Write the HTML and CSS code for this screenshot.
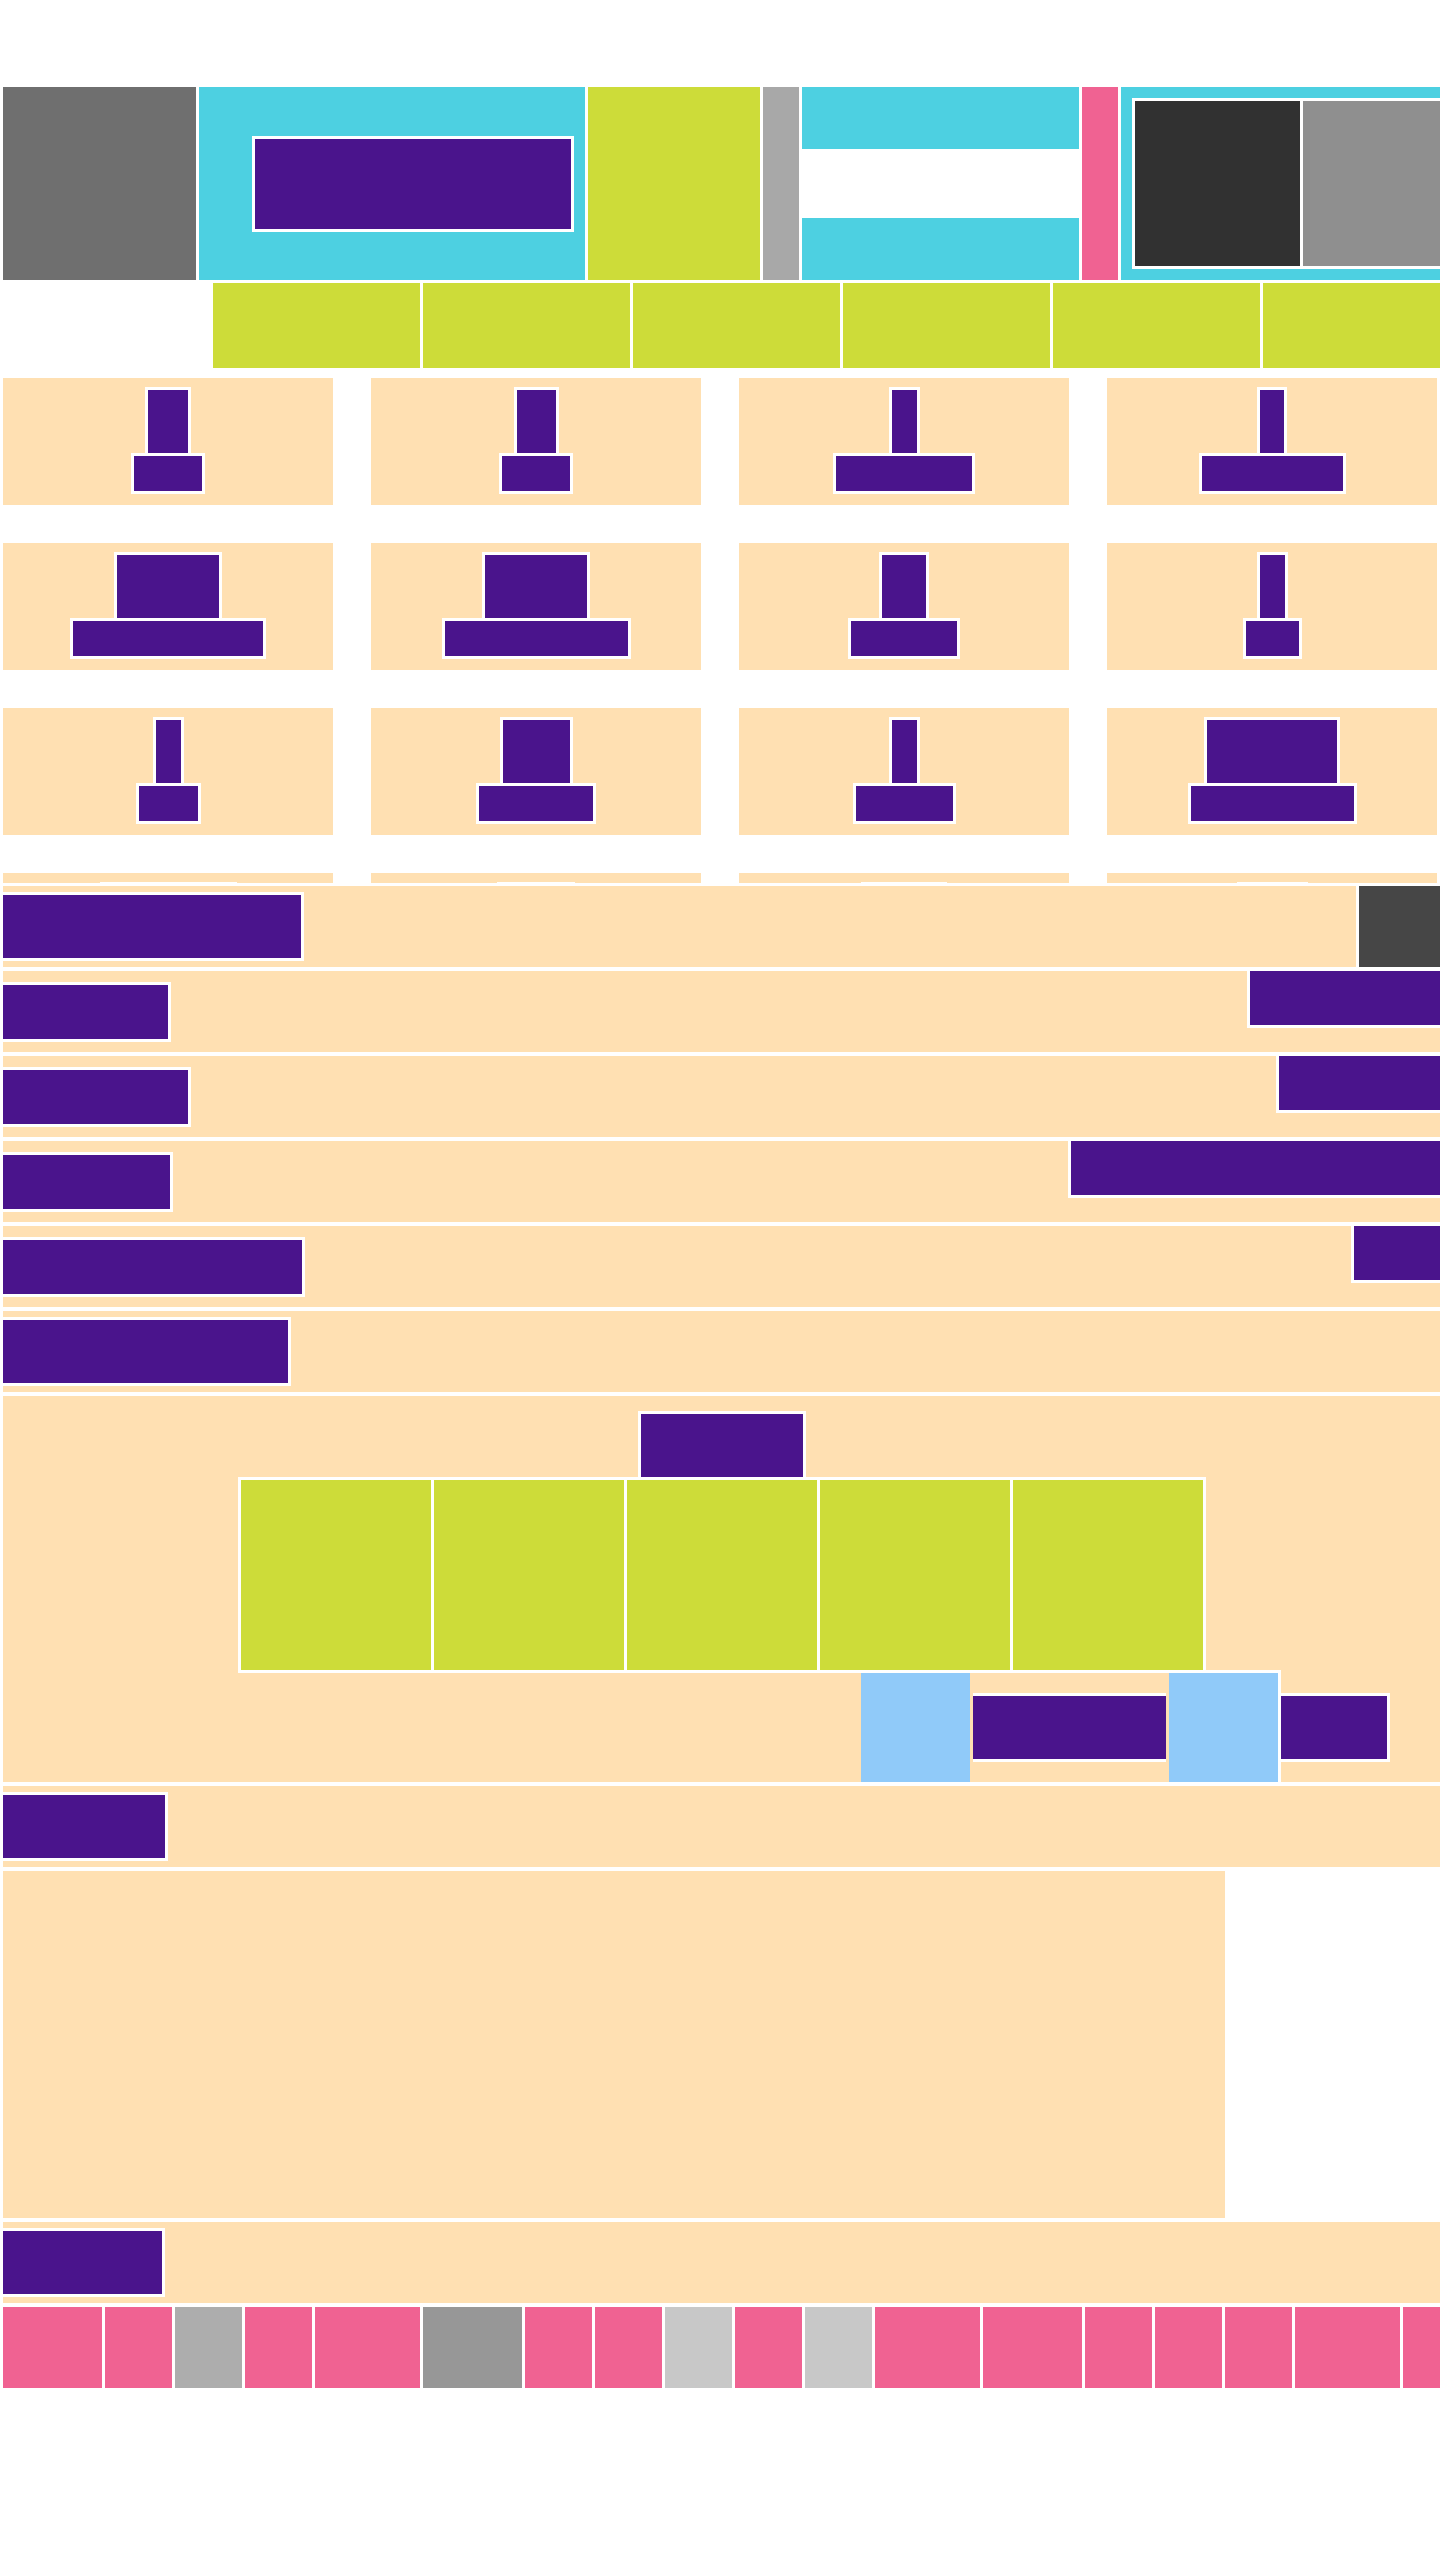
FILE: index.html
```html
<!DOCTYPE html>
<html lang="en">
<head>
    <meta charset="UTF-8">
    <meta name="viewport" content="width=device-width, initial-scale=1.0">
    <title>Wireframe</title>
    <link rel="stylesheet" href="styles.css">
</head>
<body>

    <div class="page">
        <div class="header">
            <div class="hd-gray"></div>
            <div class="hd-cyan"><div class="hd-title"></div></div>
            <div class="hd-lime"></div>
            <div class="hd-bar gray"></div>
            <div class="hd-stack">
                <div class="stack-cyan"></div>
                <div class="stack-gap"></div>
                <div class="stack-cyan"></div>
            </div>
            <div class="hd-bar pink"></div>
            <div class="hd-media">
                <div class="media-frame">
                    <div class="media-dark"></div>
                    <div class="media-light"></div>
                </div>
            </div>
        </div>

        <div class="tabs">
            <div class="tab"></div>
            <div class="tab"></div>
            <div class="tab"></div>
            <div class="tab"></div>
            <div class="tab"></div>
            <div class="tab"></div>
        </div>

        <div class="grid">
            <div class="card"><div class="peg" style="width:40px"></div><div class="base" style="width:68px"></div></div>
            <div class="card"><div class="peg" style="width:39px"></div><div class="base" style="width:68px"></div></div>
            <div class="card"><div class="peg" style="width:25px"></div><div class="base" style="width:136px"></div></div>
            <div class="card"><div class="peg" style="width:24px"></div><div class="base" style="width:141px"></div></div>

            <div class="card"><div class="peg" style="width:102px"></div><div class="base" style="width:190px"></div></div>
            <div class="card"><div class="peg" style="width:102px"></div><div class="base" style="width:183px"></div></div>
            <div class="card"><div class="peg" style="width:44px"></div><div class="base" style="width:106px"></div></div>
            <div class="card"><div class="peg" style="width:25px"></div><div class="base" style="width:53px"></div></div>

            <div class="card"><div class="peg" style="width:25px"></div><div class="base" style="width:59px"></div></div>
            <div class="card"><div class="peg" style="width:67px"></div><div class="base" style="width:114px"></div></div>
            <div class="card"><div class="peg" style="width:25px"></div><div class="base" style="width:97px"></div></div>
            <div class="card"><div class="peg" style="width:130px"></div><div class="base" style="width:163px"></div></div>

            <div class="card"><div class="peg" style="width:131px"></div><div class="base" style="width:170px"></div></div>
            <div class="card"><div class="peg" style="width:72px"></div><div class="base" style="width:110px"></div></div>
            <div class="card"><div class="peg" style="width:80px"></div><div class="base" style="width:120px"></div></div>
            <div class="card"><div class="peg" style="width:65px"></div><div class="base" style="width:100px"></div></div>
        </div>

        <div class="list">
            <div class="row">
                <div class="label tall" style="width:298px"></div>
                <div class="side dark" style="width:81px"></div>
            </div>
            <div class="row">
                <div class="label" style="width:165px"></div>
                <div class="side" style="width:190px"></div>
            </div>
            <div class="row">
                <div class="label" style="width:185px"></div>
                <div class="side" style="width:161px"></div>
            </div>
            <div class="row">
                <div class="label" style="width:167px"></div>
                <div class="side" style="width:369px"></div>
            </div>
            <div class="row">
                <div class="label" style="width:299px"></div>
                <div class="side" style="width:86px"></div>
            </div>
            <div class="row">
                <div class="label tall" style="width:285px"></div>
            </div>

            <div class="feature">
                <div class="feature-title"></div>
                <div class="panel">
                    <div class="cell"></div>
                    <div class="cell"></div>
                    <div class="cell"></div>
                    <div class="cell"></div>
                    <div class="cell"></div>
                </div>
                <div class="feature-foot">
                    <div class="foot-group">
                        <div class="foot-blue"></div>
                        <div class="foot-slot"><div class="foot-bar"></div></div>
                        <div class="foot-blue"></div>
                    </div>
                    <div class="foot-end"></div>
                </div>
            </div>

            <div class="row">
                <div class="label tall" style="width:162px"></div>
            </div>
            <div class="blank"></div>
            <div class="row">
                <div class="label tall" style="width:159px"></div>
            </div>

            <div class="swatches">
                <div class="sw mid"></div>
                <div class="sw"></div>
                <div class="sw gray"></div>
                <div class="sw"></div>
                <div class="sw wide"></div>
                <div class="sw mid dim"></div>
                <div class="sw"></div>
                <div class="sw"></div>
                <div class="sw light"></div>
                <div class="sw"></div>
                <div class="sw light"></div>
                <div class="sw wide"></div>
                <div class="sw mid"></div>
                <div class="sw"></div>
                <div class="sw"></div>
                <div class="sw"></div>
                <div class="sw wide"></div>
                <div class="sw wide"></div>
            </div>
        </div>
    </div>

</body>
</html>
```

FILE: styles.css
```css
body {
    margin: 0;
    background-color: #fff;
    font-family: 'Liberation Sans', Arial, sans-serif;
}
.page {
    width: 1437px;
    padding: 87px 0 0 3px;
    overflow: hidden;
}

/* header strip */
.header {
    display: flex;
    gap: 3px;
    height: 193px;
}
.header > div {
    flex-shrink: 0;
}
.hd-gray {
    width: 193px;
    background-color: #6f6f6f;
}
.hd-cyan {
    width: 333px;
    padding-left: 53px;
    display: flex;
    align-items: center;
    background-color: #4dd0e1;
}
.hd-title {
    width: 316px;
    height: 90px;
    background-color: #4a148c;
    border: 3px solid #fff;
}
.hd-lime {
    width: 172px;
    background-color: #cddc39;
}
.hd-bar {
    width: 36px;
}
.hd-bar.gray {
    background-color: #a8a8a8;
}
.hd-bar.pink {
    background-color: #f06292;
}
.hd-stack {
    width: 277px;
    display: flex;
    flex-direction: column;
}
.stack-cyan {
    height: 62px;
    background-color: #4dd0e1;
}
.stack-gap {
    flex: 1;
}
.hd-media {
    width: 308px;
    padding: 11px 0 0 11px;
    background-color: #4dd0e1;
    overflow: hidden;
}
.media-frame {
    display: flex;
    gap: 3px;
    padding: 3px;
    width: 400px;
    background-color: #fff;
}
.media-dark {
    width: 165px;
    height: 165px;
    flex-shrink: 0;
    background-color: #313131;
}
.media-light {
    width: 220px;
    flex-shrink: 0;
    background-color: #8f8f8f;
}

/* tab strip */
.tabs {
    display: flex;
    gap: 3px;
    height: 85px;
    margin: 3px 0 0 210px;
}
.tab {
    width: 207px;
    flex-shrink: 0;
    background-color: #cddc39;
}

/* card grid */
.grid {
    display: grid;
    grid-template-columns: repeat(4, 330px);
    grid-auto-rows: 127px;
    gap: 38px;
    margin-top: 10px;
    height: 505px;
    overflow: hidden;
}
.card {
    display: flex;
    flex-direction: column;
    align-items: center;
    padding-top: 9px;
    background-color: #ffe0b2;
}
.peg {
    height: 63px;
    background-color: #4a148c;
    border: 3px solid #fff;
}
.base {
    height: 35px;
    margin-top: -3px;
    background-color: #4a148c;
    border: 3px solid #fff;
}

/* list */
.list {
    display: flex;
    flex-direction: column;
    gap: 4px;
    margin-top: 3px;
}
.row {
    height: 81px;
    display: flex;
    align-items: center;
    justify-content: space-between;
    overflow: hidden;
    background-color: #ffe0b2;
}
.label {
    height: 54px;
    background-color: #4a148c;
    border: 3px solid #fff;
    border-left: 0;
}
.label.tall {
    height: 63px;
}
.side {
    align-self: flex-start;
    height: 54px;
    flex-shrink: 0;
    background-color: #4a148c;
    border-left: 3px solid #fff;
    border-bottom: 3px solid #fff;
}
.side.dark {
    align-self: stretch;
    height: auto;
    background-color: #464646;
    border-bottom: 0;
}

/* feature block */
.feature {
    display: flex;
    flex-direction: column;
    align-items: center;
    padding-top: 15px;
    background-color: #ffe0b2;
}
.feature-title {
    width: 162px;
    height: 63px;
    background-color: #4a148c;
    border: 3px solid #fff;
}
.panel {
    display: flex;
    gap: 3px;
    padding: 3px;
    margin-top: -3px;
    background-color: #fff;
}
.cell {
    width: 190px;
    height: 190px;
    background-color: #cddc39;
}
.feature-foot {
    align-self: flex-start;
    display: flex;
    margin: -3px 0 0 858px;
}
.foot-group {
    display: flex;
    gap: 3px;
    height: 109px;
    border-top: 3px solid #fff;
    border-right: 3px solid #fff;
}
.foot-blue {
    width: 109px;
    background-color: #90caf9;
}
.foot-slot {
    width: 193px;
    display: flex;
    align-items: center;
}
.foot-bar {
    width: 193px;
    height: 63px;
    background-color: #4a148c;
    border-top: 3px solid #fff;
    border-bottom: 3px solid #fff;
}
.foot-end {
    align-self: flex-end;
    width: 106px;
    height: 63px;
    margin-bottom: 20px;
    background-color: #4a148c;
    border: 3px solid #fff;
    border-left: 0;
}
.blank {
    width: 1222px;
    height: 347px;
    background-color: #ffe0b2;
}

/* colour strip */
.swatches {
    display: flex;
    gap: 3px;
    height: 81px;
    overflow: hidden;
}
.sw {
    width: 67px;
    flex-shrink: 0;
    background-color: #f06292;
}
.sw.mid {
    width: 99px;
}
.sw.wide {
    width: 105px;
}
.sw.gray {
    background-color: #adadad;
}
.sw.dim {
    background-color: #979797;
}
.sw.light {
    background-color: #c8c8c8;
}
```
